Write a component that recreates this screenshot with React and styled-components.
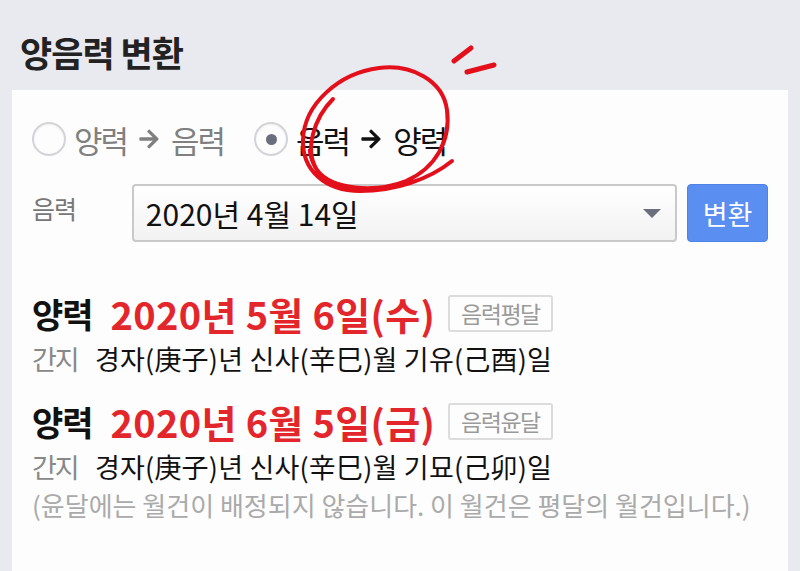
import styled, { createGlobalStyle } from "styled-components";
import { FaArrowRight } from "react-icons/fa";

const GlobalStyle = createGlobalStyle`
  body {
    margin: 0;
    font-family: "Noto Sans CJK KR", "Noto Sans", sans-serif;
    background: #e9eaef;
  }
`;

const Page = styled.div`
  position: relative;
  width: 800px;
  height: 571px;
  overflow: hidden;
  background: #e9eaef;
`;

const Title = styled.h1`
  margin: 0;
  padding: 30px 0 0 20px;
  height: 90px;
  box-sizing: border-box;
  font-size: 35px;
  font-weight: 700;
  color: #222;
  line-height: 44px;
  letter-spacing: -1px;
`;

const Card = styled.div`
  margin: 0 12px;
  height: 481px;
  background: #fdfdfd;
  padding: 28px 20px 0 20px;
  box-sizing: border-box;
`;

const RadioRow = styled.div`
  display: flex;
  align-items: center;
  gap: 30px;
  height: 42px;
`;

const RadioOption = styled.label`
  display: flex;
  align-items: center;
  gap: 8px;
  font-size: 31px;
  letter-spacing: -2px;
  color: ${(p) => (p.checked ? "#111" : "#808080")};
`;

const Circle = styled.span`
  width: 34px;
  height: 34px;
  border-radius: 50%;
  border: 2px solid #d4d4d8;
  box-sizing: border-box;
  background: #fdfdfd;
  display: flex;
  align-items: center;
  justify-content: center;
  box-shadow: inset 0 1px 2px rgba(0, 0, 0, 0.06);
`;

const Dot = styled.span`
  width: 11px;
  height: 11px;
  border-radius: 50%;
  background: #6b6f7d;
`;

const Arrow = styled(FaArrowRight)`
  font-size: 22px;
  margin: 0 3px;
  color: ${(p) => (p.$dark ? "#111" : "#808080")};
`;

const InputRow = styled.div`
  display: flex;
  align-items: flex-start;
  margin-top: 24px;
`;

const InputLabel = styled.div`
  width: 100px;
  font-size: 25px;
  letter-spacing: -1px;
  color: #777;
  padding-top: 6px;
`;

const Select = styled.div`
  width: 546px;
  height: 58px;
  box-sizing: border-box;
  border: 2px solid #c9c9c9;
  border-radius: 4px;
  background: linear-gradient(#ffffff, #f2f2f2);
  display: flex;
  align-items: center;
  justify-content: space-between;
  padding: 0 14px 0 12px;
  font-size: 30px;
  color: #111;
`;

const Caret = styled.span`
  width: 0;
  height: 0;
  border-left: 9px solid transparent;
  border-right: 9px solid transparent;
  border-top: 9px solid #6b6f7d;
`;

const Button = styled.button`
  margin-left: 10px;
  width: 81px;
  height: 58px;
  border: 1px solid #4d82e6;
  border-radius: 4px;
  background: #5a8ef0;
  color: #fff;
  font-family: inherit;
  font-size: 27px;
  padding: 0;
`;

const Result = styled.div`
  margin-top: ${(p) => p.$top}px;
`;

const Heading = styled.div`
  display: flex;
  align-items: center;
  height: 40px;
`;

const Solar = styled.span`
  font-size: 34px;
  font-weight: 700;
  color: #111;
  letter-spacing: -1px;
`;

const DateText = styled.span`
  margin-left: 18px;
  font-size: 38px;
  font-weight: 700;
  color: #e3262b;
  letter-spacing: 0.3px;
`;

const Badge = styled.span`
  margin-left: 13px;
  height: 37px;
  box-sizing: border-box;
  padding: 0 11px;
  border: 2px solid #dcdcdc;
  border-radius: 3px;
  font-size: 23px;
  color: #9a9a9a;
  display: flex;
  align-items: center;
  letter-spacing: -1.5px;
`;

const GanjiRow = styled.div`
  display: flex;
  align-items: center;
  margin-top: 5px;
  height: 40px;
  font-size: 27px;
`;

const GanjiLabel = styled.span`
  width: 63px;
  color: #888;
  letter-spacing: -2px;
`;

const GanjiValue = styled.span`
  color: #111;
  letter-spacing: 0.2px;
`;

const Note = styled.div`
  margin-top: 0;
  font-size: 26px;
  color: #aaa;
`;

const Scribble = styled.svg`
  position: absolute;
  left: 0;
  top: 0;
  pointer-events: none;
`;

const results = [
  {
    date: "2020년 5월 6일(수)",
    badge: "음력평달",
    ganji: "경자(庚子)년 신사(辛巳)월 기유(己酉)일",
  },
  {
    date: "2020년 6월 5일(금)",
    badge: "음력윤달",
    ganji: "경자(庚子)년 신사(辛巳)월 기묘(己卯)일",
  },
];

export default function App() {
  return (
    <Page>
      <GlobalStyle />
      <Title>양음력 변환</Title>
      <Card>
        <RadioRow>
          <RadioOption>
            <Circle />
            양력
            <Arrow />
            음력
          </RadioOption>
          <RadioOption checked>
            <Circle>
              <Dot />
            </Circle>
            음력
            <Arrow $dark />
            양력
          </RadioOption>
        </RadioRow>
        <InputRow>
          <InputLabel>음력</InputLabel>
          <Select>
            2020년 4월 14일
            <Caret />
          </Select>
          <Button>변환</Button>
        </InputRow>
        {results.map((r, i) => (
          <Result key={r.date} $top={i === 0 ? 51 : 23}>
            <Heading>
              <Solar>양력</Solar>
              <DateText>{r.date}</DateText>
              <Badge>{r.badge}</Badge>
            </Heading>
            <GanjiRow>
              <GanjiLabel>간지</GanjiLabel>
              <GanjiValue>{r.ganji}</GanjiValue>
            </GanjiRow>
          </Result>
        ))}
        <Note>(윤달에는 월건이 배정되지 않습니다. 이 월건은 평달의 월건입니다.)</Note>
      </Card>
      <Scribble width="800" height="571" viewBox="0 0 800 571">
        <g fill="none" stroke="#e3101c" strokeLinecap="round" strokeWidth="4">
          <path d="M333 99 C314 118 304 150 317 170 C331 190 375 193 406 181 C436 168 451 140 447 110 C443 80 411 64 379 68 C339 73 304 104 303 140 C302 170 325 191 360 191 C395 191 430 179 452 161" />
          <path d="M309 150 C311 173 331 187 365 188" strokeWidth="2.5" />
          <path d="M454 61 L471 48" strokeWidth="5" />
          <path d="M467 72 L494 65" strokeWidth="5" />
        </g>
      </Scribble>
    </Page>
  );
}
